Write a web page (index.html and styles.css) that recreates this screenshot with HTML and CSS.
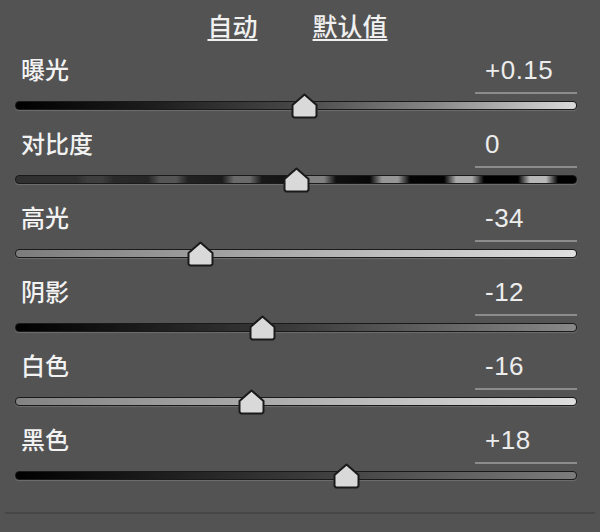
FILE: index.html
```html
<!DOCTYPE html>
<html lang="zh-CN">
<head>
    <meta charset="UTF-8">
    <meta name="viewport" content="width=device-width, initial-scale=1.0">
    <title>基本调整</title>
    <link rel="stylesheet" href="styles.css">
</head>
<body>
    <div class="panel">
        <div class="header">
            <a class="link" href="#">自动</a>
            <a class="link" href="#">默认值</a>
        </div>

        <div class="row">
            <div class="head">
                <span class="label">曝光</span>
                <span class="value">+0.15</span>
            </div>
            <div class="track exposure">
                <svg class="thumb" style="left: 51.5%" viewBox="0 0 27 26"><polygon points="13.5,1.5 25.5,12 25.5,23 24,24.5 3,24.5 1.5,23 1.5,12"/></svg>
            </div>
        </div>

        <div class="row">
            <div class="head">
                <span class="label">对比度</span>
                <span class="value">0</span>
            </div>
            <div class="track contrast">
                <svg class="thumb" style="left: 50%" viewBox="0 0 27 26"><polygon points="13.5,1.5 25.5,12 25.5,23 24,24.5 3,24.5 1.5,23 1.5,12"/></svg>
            </div>
        </div>

        <div class="row">
            <div class="head">
                <span class="label">高光</span>
                <span class="value">-34</span>
            </div>
            <div class="track highlights">
                <svg class="thumb" style="left: 33%" viewBox="0 0 27 26"><polygon points="13.5,1.5 25.5,12 25.5,23 24,24.5 3,24.5 1.5,23 1.5,12"/></svg>
            </div>
        </div>

        <div class="row">
            <div class="head">
                <span class="label">阴影</span>
                <span class="value">-12</span>
            </div>
            <div class="track shadows">
                <svg class="thumb" style="left: 44%" viewBox="0 0 27 26"><polygon points="13.5,1.5 25.5,12 25.5,23 24,24.5 3,24.5 1.5,23 1.5,12"/></svg>
            </div>
        </div>

        <div class="row">
            <div class="head">
                <span class="label">白色</span>
                <span class="value">-16</span>
            </div>
            <div class="track whites">
                <svg class="thumb" style="left: 42%" viewBox="0 0 27 26"><polygon points="13.5,1.5 25.5,12 25.5,23 24,24.5 3,24.5 1.5,23 1.5,12"/></svg>
            </div>
        </div>

        <div class="row">
            <div class="head">
                <span class="label">黑色</span>
                <span class="value">+18</span>
            </div>
            <div class="track blacks">
                <svg class="thumb" style="left: 59%" viewBox="0 0 27 26"><polygon points="13.5,1.5 25.5,12 25.5,23 24,24.5 3,24.5 1.5,23 1.5,12"/></svg>
            </div>
        </div>

        <div class="footer"></div>
    </div>
</body>
</html>
```

FILE: styles.css
```css
body {
    margin: 0;
    padding: 0;
    background-color: #535353;
    font-family: "Noto Sans CJK SC", "Noto Sans", sans-serif;
    color: #f2f2f2;
}
.panel {
    width: 600px;
    height: 532px;
}
.header {
    display: flex;
    justify-content: center;
    gap: 55px;
    height: 50px;
    padding-right: 5px;
    box-sizing: border-box;
    padding-top: 13px;
}
.link {
    font-size: 25px;
    line-height: 25px;
    font-weight: 500;
    color: #f0f0f0;
    text-decoration: underline;
    text-decoration-thickness: 2px;
    text-underline-offset: 3px;
}
.row {
    height: 74px;
}
.head {
    display: flex;
    justify-content: space-between;
    align-items: flex-start;
    height: 44px;
}
.label {
    font-size: 24px;
    line-height: 24px;
    font-weight: 500;
    margin: 7px 0 0 21px;
}
.value {
    width: 92px;
    height: 34px;
    padding: 8px 0 0 10px;
    margin-right: 23px;
    border-bottom: 2px solid #8c8c8c;
    font-family: "Liberation Sans", Arial, sans-serif;
    font-size: 26px;
    line-height: 24px;
    letter-spacing: 0.5px;
    color: #ececec;
}
.track {
    position: relative;
    height: 7px;
    margin: 7px 23px 0 15px;
    border: 1px solid #1a1a1a;
    border-radius: 4px;
    box-shadow: 0 1px 1px rgba(255, 255, 255, 0.16);
}
.exposure {
    background: linear-gradient(to right, #000 0, #1e1e1e 25%, #474747 50%, #888 75%, #dadada 100%);
}
.contrast {
    background: linear-gradient(to right,
        #303030 0, #303030 60px, #3e3e3e 72px, #3e3e3e 86px, #2a2a2a 98px,
        #262626 132px, #555 144px, #555 160px, #222 172px,
        #1c1c1c 206px, #6a6a6a 218px, #6a6a6a 234px, #181818 246px,
        #121212 280px, #808080 292px, #808080 308px, #101010 320px,
        #080808 354px, #969696 366px, #969696 382px, #050505 394px,
        #020202 428px, #a8a8a8 440px, #a8a8a8 456px, #000 468px,
        #000 502px, #b8b8b8 514px, #b8b8b8 530px, #000 542px, #000 100%);
}
.highlights {
    background: linear-gradient(to right, #7c7c7c, #e0e0e0);
}
.shadows {
    background: linear-gradient(to right, #000, #3c3c3c 50%, #888);
}
.whites {
    background: linear-gradient(to right, #838383, #dedede);
}
.blacks {
    background: linear-gradient(to right, #000, #383838 50%, #7c7c7c);
}
.thumb {
    position: absolute;
    top: -9px;
    width: 27px;
    height: 26px;
    margin-left: -13.5px;
}
.thumb polygon {
    fill: #d9d9d9;
    stroke: #1a1a1a;
    stroke-width: 2;
    stroke-linejoin: round;
}
.footer {
    margin: 18px 5px 0;
    border-top: 2px solid #464646;
}
```
